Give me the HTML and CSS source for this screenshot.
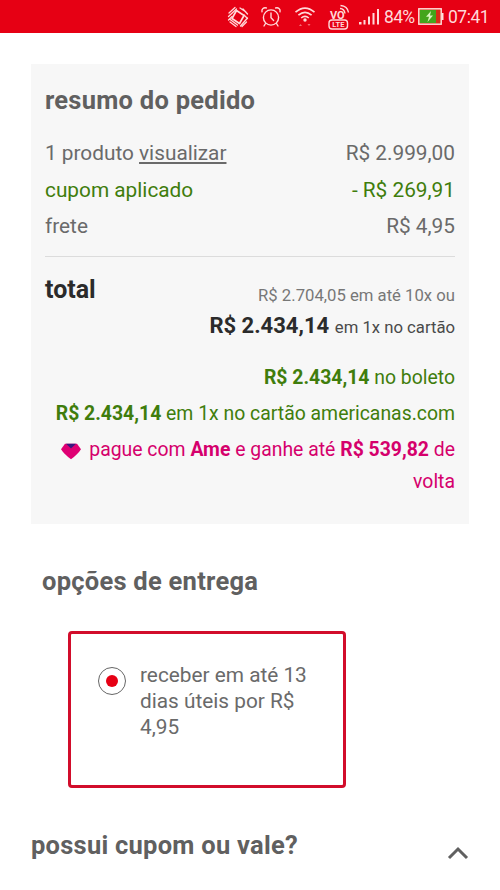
FILE: index.html
```html
<!DOCTYPE html>
<html lang="pt-BR">
<head>
<meta charset="utf-8">
<meta name="viewport" content="width=device-width, initial-scale=1">
<title>resumo do pedido</title>
<link rel="stylesheet" href="styles.css">
</head>
<body>
<header class="status">
  <svg class="rotate" width="24" height="24" viewBox="0 0 24 24" fill="none" stroke="currentColor">
    <path d="M10.500 5.500 18 10.500 13.500 18.500 6 13.500z" stroke-width="1.700" stroke-linejoin="round"/>
    <path d="M3 8 9 2.500M2.500 11.500 10.500 4M2.500 15 6 11.500M14 3l6 4M17 4l4.500 5M18 10l3.500 3.500M21.500 13 14.500 21M20.500 17 16 21.500M4 17l6 4.500M3.500 14l8 6" stroke-width="1.300" stroke-linecap="round"/>
  </svg>
  <svg class="alarm" width="22" height="22" viewBox="0 0 22 22" fill="none" stroke="currentColor" stroke-width="1.4" stroke-linecap="round">
    <circle cx="11" cy="11.500" r="7.600"/><path d="M11 7v4.800l2.600 2.600M2 5.800A3.200 3.200 0 0 1 6.400 2M20 5.800A3.200 3.200 0 0 0 15.600 2M5.500 17.500 4 20M16.500 17.500 18 20"/>
  </svg>
  <svg class="wifi" width="22" height="22" viewBox="0 0 22 22" fill="none" stroke="currentColor" stroke-width="1.6">
    <path d="M1.500 6.200Q11-2 20.500 6.200M4.400 9.200Q11 3.400 17.600 9.200M7.200 12Q11 8.800 14.800 12"/><circle cx="11" cy="14" r="1.700" fill="currentColor" stroke="none"/><path d="m5 20 1.500-2L8 20zM13.500 18 15 20l1.500-2z" fill="currentColor" stroke="none" opacity=".5"/>
  </svg>
  <svg class="volte" width="22" height="26" viewBox="0 0 22 26" fill="none" stroke="currentColor" stroke-width="1.4">
    <text x="2" y="14.500" class="vo">VO</text><text x="4.300" y="23.200" class="lte">LTE</text>
    <rect x="1" y="16" width="18.500" height="9" rx="3"/><path d="M12 4.500q4.300.3 5 5M12.500 1.500q7 .5 8 7"/>
  </svg>
  <svg class="signal" width="21" height="18" viewBox="0 0 21 18" fill="currentColor"><path d="M0 14h2.500v2.500H0zM4.500 12h2v4.500h-2zM9 8.500h2v8H9zM13.500 5h2v11.500h-2zM18 1h2v15.500h-2z"/></svg>
  <span class="pct">84%</span>
  <svg class="battery" width="26" height="17" viewBox="0 0 26 17"><rect x=".8" y=".8" width="22.400" height="15.400" fill="#d92b18" stroke="#ffe3df" stroke-width="1.400"/><path d="M2 2h16v13H2z" fill="#43a51b"/><path d="M23.500 5H25.500v7h-2z" fill="#ffe3df"/><path d="m13 3-5 5.800h3L9.500 14l5.500-6.500h-3z" fill="#d8f5bd"/></svg>
  <span class="clock">07:41</span>
</header>
<main>
  <section class="summary">
    <h2>resumo do pedido</h2>
    <div class="rows">
      <div class="row"><span>1 produto <a class="link">visualizar</a></span><span>R$ 2.999,00</span></div>
      <div class="row green"><span>cupom aplicado</span><span>- R$ 269,91</span></div>
      <div class="row"><span>frete</span><span>R$ 4,95</span></div>
    </div>
    <div class="totals">
      <strong class="total">total</strong>
      <div class="amounts">
        <p class="installments">R$ 2.704,05 em até 10x ou</p>
        <p class="card"><b>R$ 2.434,14</b> <span>em 1x no cartão</span></p>
      </div>
    </div>
    <div class="payments">
      <p class="green"><b>R$ 2.434,14</b> no boleto</p>
      <p class="green"><b>R$ 2.434,14</b> em 1x no cartão americanas.com</p>
      <p class="ame"><svg width="22" height="17" viewBox="0 0 22 17"><path d="M5 .8h12l4 5.400Q18 11 11 16.300 4 11 1 6.200z" fill="#df0074"/><path d="M6 .8h10L11 5.500z" fill="#3b187f"/></svg><span>pague com <b>Ame</b> e ganhe até <b>R$ 539,82</b> de<br>volta</span></p>
    </div>
  </section>
  <section class="delivery">
    <h2>opções de entrega</h2>
    <label class="option"><i class="radio"></i><span>receber em até 13<br>dias úteis por R$<br>4,95</span></label>
  </section>
  <section class="coupon">
    <h2>possui cupom ou vale?</h2>
    <svg width="22" height="14" viewBox="0 0 22 14" fill="none" stroke="#606060" stroke-width="3"><path d="m2 12 9-9 9 9"/></svg>
  </section>
</main>
</body>
</html>
```
FILE: styles.css
```css
* { box-sizing: border-box; }
body { margin: 0; height: 890px; overflow: hidden; background: #fff; color: #6a6a6a; font: 20.8px Roboto, sans-serif; }
h2, p { margin: 0; }
h2 { color: #606060; font-size: 25.5px; letter-spacing: .25px; font-weight: 700; line-height: 41px; white-space: nowrap; }
b { font-weight: 700; }
.status { height: 33px; display: flex; align-items: center; padding-left: 226px; background: #e60014; color: #ffd9d9; font-size: 17.5px; white-space: nowrap; }
.status svg { flex: none; }
.alarm { margin-left: 10px; }
.wifi { margin-left: 12px; }
.volte { margin-left: 12px; }
.vo { font: bold 11px Roboto, sans-serif; fill: currentColor; stroke: none; }
.lte { font: bold 7.5px Roboto, sans-serif; fill: currentColor; stroke: none; }
.signal { margin-left: 9px; }
.pct { width: 31px; margin-left: 4px; letter-spacing: -.7px; }
.battery { margin-left: 3px; }
.clock { margin-left: 4px; letter-spacing: -.5px; }
.summary { width: 438px; height: 460px; margin: 31px 0 0 31px; padding: 16px 14px 0; background: #f7f7f7; }
.rows { margin-top: 14px; padding-bottom: 11px; border-bottom: 1px solid #dcdcdc; }
.row { display: flex; justify-content: space-between; line-height: 36.5px; white-space: nowrap; }
.link { text-decoration: underline; text-underline-offset: 2px; }
.green { color: #3f7d0c; }
.totals { display: flex; justify-content: space-between; padding-top: 18px; }
.total { color: #2b2b2b; font-size: 25px; line-height: 30px; }
.amounts { padding-top: 6px; text-align: right; white-space: nowrap; }
.installments { font-size: 16.7px; line-height: 30px; color: #777; }
.card { font-size: 16.7px; line-height: 29px; color: #4a4a4a; }
.card b { font-size: 22px; color: #2b2b2b; margin-right: 1.5px; }
.payments { margin-top: 18px; font-size: 19.4px; text-align: right; white-space: nowrap; }
.payments p { line-height: 36.300px; }
.payments .ame { display: flex; justify-content: flex-end; gap: 7px; padding-top: 2px; color: #d5006c; line-height: 32px; }
.ame svg { margin-top: 9px; }
.delivery { padding: 37px 0 0 42px; }
.option { display: flex; width: 278px; height: 157px; margin: 29px 0 0 26px; padding: 28px 0 0 27px; border: 3px solid #d20d2b; border-radius: 4px; line-height: 26px; white-space: nowrap; }
.radio { display: grid; place-items: center; width: 28px; height: 28px; margin: 5px 14px 0 0; border: 1.5px solid #666; border-radius: 50%; }
.radio::before { content: ""; width: 12px; height: 12px; border-radius: 50%; background: #e60014; }
.coupon { display: flex; justify-content: space-between; align-items: center; padding: 37px 31px 0; }
.coupon svg { margin-top: 14px; }
```
